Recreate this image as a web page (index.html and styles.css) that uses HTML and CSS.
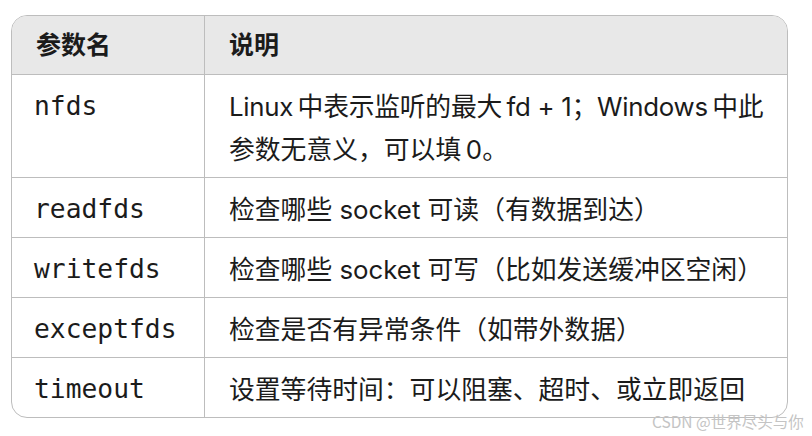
FILE: index.html
```html
<!DOCTYPE html>
<html lang="zh-CN">
<head>
<meta charset="utf-8">
<link rel="stylesheet" href="styles.css">
</head>
<body>
<div class="frame">
  <table class="params">
    <thead>
      <tr><th class="c1">参数名</th><th>说明</th></tr>
    </thead>
    <tbody>
      <tr><td class="c1 code">nfds</td><td><span class="tight">Linux&thinsp;中表示监听的最大&thinsp;fd + 1；Windows&thinsp;中此</span><br>参数无意义，可以填&thinsp;0。</td></tr>
      <tr><td class="c1 code">readfds</td><td>检查哪些 socket 可读（有数据到达）</td></tr>
      <tr><td class="c1 code">writefds</td><td>检查哪些 socket 可写（比如发送缓冲区空闲）</td></tr>
      <tr><td class="c1 code">exceptfds</td><td>检查是否有异常条件（如带外数据）</td></tr>
      <tr><td class="c1 code">timeout</td><td>设置等待时间：可以阻塞、超时、或立即返回</td></tr>
    </tbody>
  </table>
</div>
<div class="mark">CSDN @世界尽头与你</div>
</body>
</html>
```
FILE: styles.css
```css
html, body {
  margin: 0;
  padding: 0;
  background: #ffffff;
}
body {
  padding: 15px 0 0 11px;
  font-family: Inter, "Noto Sans CJK SC", sans-serif;
  color: #1b1b1b;
}
.frame {
  width: 775px;
  border: 1px solid #bdbdbd;
  border-radius: 16px;
  overflow: hidden;
}
.params {
  width: 100%;
  table-layout: fixed;
  border-collapse: collapse;
  font-size: 25.8px;
  line-height: 43px;
}
.params th, .params td {
  padding: 10px 24px 6px;
  text-align: left;
  vertical-align: top;
  white-space: nowrap;
  border-left: 1px solid #bdbdbd;
  border-top: 1px solid #bdbdbd;
}
.params th {
  background: #e8e8e8;
  font-weight: 700;
  font-size: 25px;
  border-top: none;
  padding-top: 8px;
  padding-bottom: 7px;
}
.params .c1 {
  width: 144px;
  border-left: none;
}
.params .code {
  font-family: "DejaVu Sans Mono", monospace;
  font-size: 26.3px;
  padding-left: 22px;
  padding-right: 26px;
}
.tight {
  letter-spacing: -0.25px;
}
.mark {
  position: absolute;
  left: 652px;
  top: 411px;
  font-family: "Noto Sans CJK SC", sans-serif;
  font-size: 15.5px;
  line-height: 20px;
  color: #c4c4c4;
}
```
